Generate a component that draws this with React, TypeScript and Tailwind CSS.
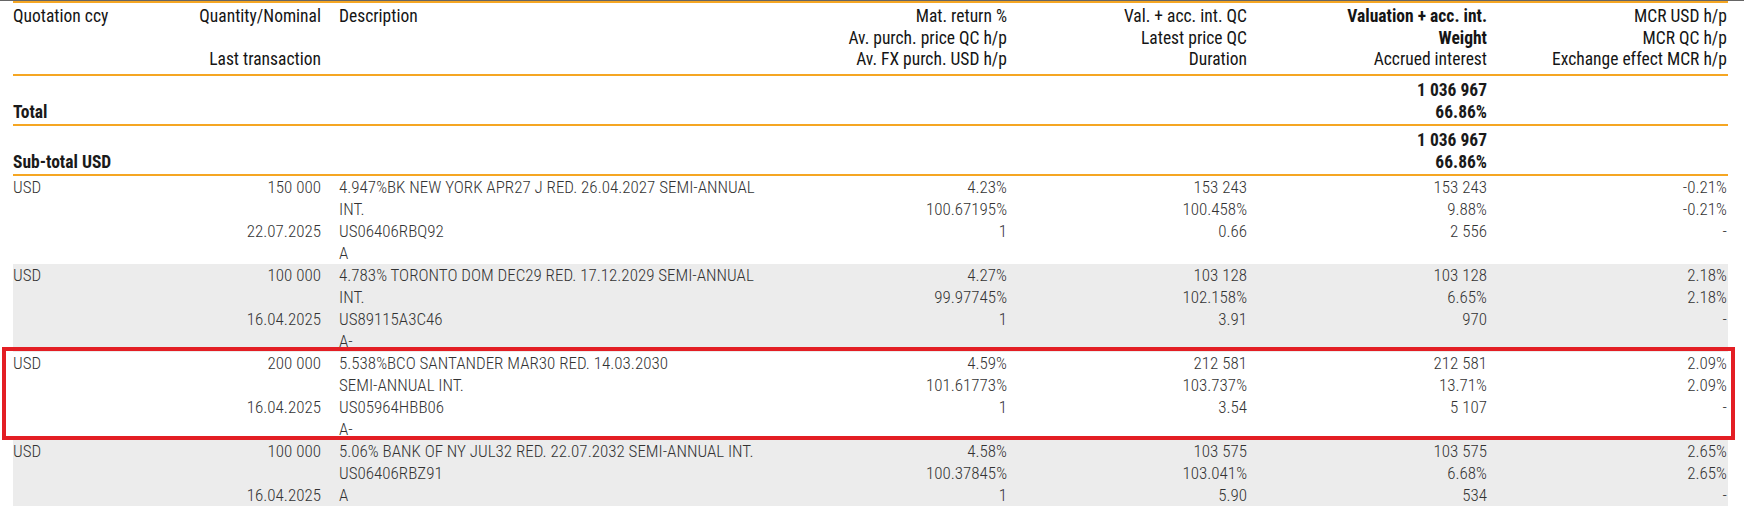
import type { ReactNode } from 'react'

type Row = {
  ccy: string
  qty: string
  date: string
  desc: string[]
  mat: string[]
  val: string[]
  valuation: string[]
  mcr: string[]
  shaded?: boolean
  marked?: boolean
}

const rows: Row[] = [
  {
    ccy: 'USD',
    qty: '150 000',
    date: '22.07.2025',
    desc: ['4.947%BK NEW YORK APR27 J RED. 26.04.2027 SEMI-ANNUAL', 'INT.', 'US06406RBQ92', 'A'],
    mat: ['4.23%', '100.67195%', '1'],
    val: ['153 243', '100.458%', '0.66'],
    valuation: ['153 243', '9.88%', '2 556'],
    mcr: ['-0.21%', '-0.21%', '-'],
  },
  {
    ccy: 'USD',
    qty: '100 000',
    date: '16.04.2025',
    desc: ['4.783% TORONTO DOM DEC29 RED. 17.12.2029 SEMI-ANNUAL', 'INT.', 'US89115A3C46', 'A-'],
    mat: ['4.27%', '99.97745%', '1'],
    val: ['103 128', '102.158%', '3.91'],
    valuation: ['103 128', '6.65%', '970'],
    mcr: ['2.18%', '2.18%', '-'],
    shaded: true,
  },
  {
    ccy: 'USD',
    qty: '200 000',
    date: '16.04.2025',
    desc: ['5.538%BCO SANTANDER MAR30 RED. 14.03.2030', 'SEMI-ANNUAL INT.', 'US05964HBB06', 'A-'],
    mat: ['4.59%', '101.61773%', '1'],
    val: ['212 581', '103.737%', '3.54'],
    valuation: ['212 581', '13.71%', '5 107'],
    mcr: ['2.09%', '2.09%', '-'],
    marked: true,
  },
  {
    ccy: 'USD',
    qty: '100 000',
    date: '16.04.2025',
    desc: ['5.06% BANK OF NY JUL32 RED. 22.07.2032 SEMI-ANNUAL INT.', 'US06406RBZ91', 'A'],
    mat: ['4.58%', '100.37845%', '1'],
    val: ['103 575', '103.041%', '5.90'],
    valuation: ['103 575', '6.68%', '534'],
    mcr: ['2.65%', '2.65%', '-'],
    shaded: true,
  },
]

const grid = 'grid grid-cols-[120px_188px_446px_240px_240px_240px_240px]'

const Rule = () => <div className="h-[2px] bg-[#f5a623]" />

const Lines = ({ items, right, bold }: { items: ReactNode[]; right?: boolean; bold?: boolean }) => (
  <div className={`flex flex-col ${right ? 'items-end text-right' : ''} ${bold ? 'font-bold' : ''}`}>
    {items.map((item, i) => (
      <div key={i} className="h-[22px] whitespace-nowrap">
        {item}
      </div>
    ))}
  </div>
)

const HeadLines = ({ items, right }: { items: ReactNode[]; right?: boolean }) => (
  <div className={`flex flex-col ${right ? 'items-end text-right' : ''}`}>
    {items.map((item, i) => (
      <div key={i} className="h-[21.5px] leading-[21.5px] whitespace-nowrap">
        {item}
      </div>
    ))}
  </div>
)

const TotalBlock = ({ label }: { label: string }) => (
  <div className={`${grid} pt-[3px] pb-[1px] text-[#1a1a1a] text-[17.5px] leading-[22px]`}>
    <div className="col-span-3 flex flex-col font-bold">
      <div className="h-[22px]" />
      <div className="h-[22px] whitespace-nowrap">{label}</div>
    </div>
    <div />
    <div />
    <Lines items={['1 036 967', '66.86%']} right bold />
    <div />
  </div>
)

export default function App() {
  return (
    <div
      className="relative w-[1744px] h-[528px] bg-white overflow-hidden"
      style={{ fontFamily: '"Roboto Condensed", "Liberation Sans", Arial, sans-serif' }}
    >
      <div className="h-px bg-[#666]" />
      <div className="ml-[13px] w-[1715px]">
        <Rule />
        <div className={`${grid} pt-[3px] pb-[3px] text-[17.5px] text-[#151515]`}>
          <HeadLines items={['Quotation ccy']} />
          <HeadLines items={['Quantity/Nominal', '', 'Last transaction']} right />
          <div className="pl-[18px]">
            <HeadLines items={['Description']} />
          </div>
          <HeadLines items={['Mat. return %', 'Av. purch. price QC h/p', 'Av. FX purch. USD h/p']} right />
          <HeadLines items={['Val. + acc. int. QC', 'Latest price QC', 'Duration']} right />
          <HeadLines
            items={[
              <span className="font-bold">Valuation + acc. int.</span>,
              <span className="font-bold">Weight</span>,
              'Accrued interest',
            ]}
            right
          />
          <HeadLines items={['MCR USD h/p', 'MCR QC h/p', 'Exchange effect MCR h/p']} right />
        </div>
        <Rule />
        <TotalBlock label="Total" />
        <Rule />
        <TotalBlock label="Sub-total USD" />
        <Rule />
        <div className="text-[17px] leading-[22px] text-[#333] font-light">
          {rows.map((row, i) => (
            <div key={i} className={`relative ${grid} ${row.shaded ? 'bg-[#ececec]' : ''}`}>
              <Lines items={[row.ccy]} />
              <Lines items={[row.qty, '', row.date]} right />
              <div className="pl-[18px]">
                <Lines items={row.desc} />
              </div>
              <Lines items={row.mat} right />
              <Lines items={row.val} right />
              <Lines items={row.valuation} right />
              <Lines items={row.mcr} right />
              {row.marked && (
                <div className="absolute left-[-11px] right-[-7px] top-[-5px] bottom-0 border-4 border-[#e31e24]" />
              )}
            </div>
          ))}
        </div>
      </div>
    </div>
  )
}
